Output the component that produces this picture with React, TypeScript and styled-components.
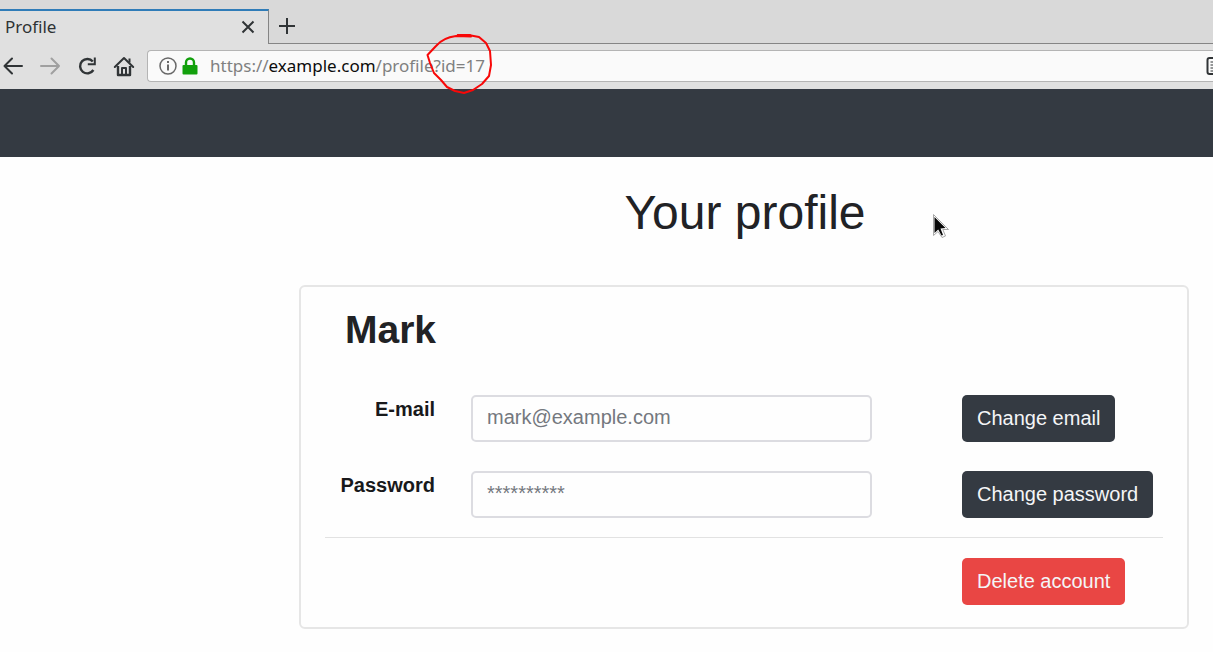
import React from "react";
import styled, { createGlobalStyle } from "styled-components";

const GlobalStyle = createGlobalStyle`
  *, *::before, *::after { box-sizing: border-box; }
  body {
    margin: 0;
    background: #fefefe;
    color: #212225;
    font-family: "Liberation Sans", Arial, sans-serif;
    font-size: 20px;
    line-height: 28px;
  }
`;

const Window = styled.div`
  position: relative;
  overflow: hidden;
`;

const Chrome = styled.header`
  background: #e0e0e0;
  font-family: "Noto Sans", sans-serif;
`;

const TabStrip = styled.div`
  display: flex;
  align-items: stretch;
  height: 44px;
  padding-top: 9px;
  background: #d9d9d9;
`;

const Tab = styled.div`
  display: flex;
  align-items: center;
  justify-content: space-between;
  width: 269px;
  padding: 0 12px 2px 5px;
  background: #e0e0e0;
  border-top: 2px solid #2f7cb8;
  border-right: 1px solid #858585;
  font-size: 17px;
  color: #2e3234;
`;

const StripRest = styled.div`
  flex: 1;
  display: flex;
  align-items: center;
  padding-left: 9px;
  border-bottom: 1px solid #858585;
`;

const IconButton = styled.button`
  display: flex;
  flex: none;
  padding: 0;
  border: 0;
  background: none;
  color: #303436;

  &:disabled { color: #a0a0a0; }
`;

const Toolbar = styled.div`
  display: flex;
  align-items: center;
  height: 45px;
  padding: 0 0 1px 2px;
`;

const NavButtons = styled.nav`
  display: flex;
  flex: none;
  align-items: center;
  gap: 15px;
  width: 145px;
`;

const AddressBar = styled.div`
  flex: 1;
  display: flex;
  align-items: center;
  height: 32px;
  padding-left: 10px;
  background: #fafafa;
  border: 1px solid #b4b4b4;
  border-right: 0;
  border-radius: 4px 0 0 4px;
`;

const LockButton = styled(IconButton)`
  margin-left: 2px;
`;

const Address = styled.div`
  flex: 1;
  margin-left: 10px;
  font-size: 17px;
  color: #808080;
  white-space: nowrap;
`;

const Host = styled.span`
  color: #0c0c0c;
`;

const ReaderButton = styled(IconButton)`
  margin-right: -9px;
`;

const SiteBar = styled.div`
  height: 68px;
  background: #343a42;
`;

const Page = styled.main`
  padding: 26px 24px 22px 299px;
`;

const Title = styled.h1`
  margin: 0 0 42px;
  padding-left: 2px;
  font-size: 48px;
  line-height: 60px;
  font-weight: 400;
  text-align: center;
`;

const Card = styled.section`
  padding: 19px 24px 22px;
  border: 2px solid #e6e6e6;
  border-radius: 6px;
`;

const Name = styled.h2`
  margin: 0 0 41px;
  padding-left: 20px;
  font-size: 39px;
  line-height: 48px;
`;

const Row = styled.div`
  display: grid;
  grid-template-columns: 110px minmax(0, 1fr) 201px;
  margin-bottom: 29px;
`;

const Label = styled.label`
  font-weight: 700;
  text-align: right;
  color: #18191b;
`;

const Field = styled.input`
  height: 47px;
  margin: 0 90px 0 36px;
  min-width: 0;
  padding: 0 14px 2px;
  border: 2px solid #dcdce1;
  border-radius: 5px;
  background: #fefefe;
  font: inherit;

  &::placeholder { color: #74787e; opacity: 1; }
`;

const Button = styled.button<{ $danger?: boolean }>`
  justify-self: start;
  height: 47px;
  padding: 0 15px 2px;
  border: 0;
  border-radius: 5px;
  background: ${(p) => (p.$danger ? "#e94644" : "#343a42")};
  color: #f4f5f7;
  font: inherit;
  white-space: nowrap;
`;

const Divider = styled.hr`
  margin: -10px 0 20px;
  border: 0;
  border-top: 1px solid #e2e2e2;
`;

const Actions = styled.div`
  display: grid;
  grid-template-columns: 201px;
  justify-content: end;
`;

const Marker = styled.svg`
  position: absolute;
  left: 424px;
  top: 30px;
  pointer-events: none;
`;

const Pointer = styled.svg`
  position: absolute;
  left: 931px;
  top: 212px;
  pointer-events: none;
`;

const stroke = { fill: "none", stroke: "currentColor", strokeWidth: 2 };

export default function App() {
  return (
    <Window>
      <GlobalStyle />
      <Chrome>
        <TabStrip>
          <Tab>
            Profile
            <IconButton aria-label="Close tab">
              <svg width="16" height="16" {...stroke}>
                <path d="M2.500 2.500l11 11M13.500 2.500l-11 11" />
              </svg>
            </IconButton>
          </Tab>
          <StripRest>
            <IconButton aria-label="New tab">
              <svg width="18" height="18" {...stroke}>
                <path d="M9 1v16M1 9h16" />
              </svg>
            </IconButton>
          </StripRest>
        </TabStrip>
        <Toolbar>
          <NavButtons aria-label="Browser">
            <IconButton aria-label="Back">
              <svg width="22" height="22" {...stroke} strokeLinecap="round" strokeLinejoin="round">
                <path d="M20 11H2.500M10 3.500L2.500 11l7.500 7.500" />
              </svg>
            </IconButton>
            <IconButton aria-label="Forward" disabled>
              <svg width="22" height="22" {...stroke} strokeLinecap="round" strokeLinejoin="round">
                <path d="M2 11h18M12.500 3.500L20 11l-7.500 7.500" />
              </svg>
            </IconButton>
            <IconButton aria-label="Reload">
              <svg width="22" height="22" fill="none" stroke="currentColor" strokeWidth="2.400">
                <path d="M17.400 15A7.200 7.200 0 1 1 16.800 6.500" />
                <path d="M18.800 2.500v6.800h-7" strokeWidth="2" />
              </svg>
            </IconButton>
            <IconButton aria-label="Home">
              <svg width="22" height="22" {...stroke} strokeLinejoin="round">
                <path d="M1.800 12L11 3l9.200 9" strokeLinecap="round" />
                <path d="M5 11v9h12v-9" strokeWidth="2.400" />
                <path d="M9 20v-7h4v7" />
                <path d="M16.500 3.500v4" />
              </svg>
            </IconButton>
          </NavButtons>
          <AddressBar>
            <IconButton aria-label="Site information">
              <svg width="20" height="20" fill="none" stroke="#686868" strokeWidth="1.500">
                <circle cx="10" cy="10" r="8" />
                <path d="M10 8.500v6M10 5v2" strokeWidth="2" />
              </svg>
            </IconButton>
            <LockButton aria-label="Secure connection">
              <svg width="20" height="20">
                <path d="M6 10V6.500a4 4 0 0 1 8 0V10" fill="none" stroke="#12a00c" strokeWidth="2.400" />
                <rect x="2.500" y="9" width="15" height="9.500" rx="1" fill="#12a00c" />
              </svg>
            </LockButton>
            <Address role="textbox" aria-label="Address" tabIndex={0}>
              https://<Host>example.com</Host>/profile?id=17
            </Address>
            <ReaderButton aria-label="Reader view">
              <svg width="16" height="20" {...stroke}>
                <rect x="1.500" y="2" width="13" height="16" rx="2" />
                <path d="M4.500 6h7M4.500 9h7M4.500 12h7M4.500 15h4" strokeWidth="1.200" />
              </svg>
            </ReaderButton>
          </AddressBar>
        </Toolbar>
      </Chrome>
      <SiteBar />
      <Page>
        <Title>Your profile</Title>
        <Card>
          <Name>Mark</Name>
          <Row>
            <Label htmlFor="email">E-mail</Label>
            <Field id="email" type="email" placeholder="mark@example.com" />
            <Button type="button">Change email</Button>
          </Row>
          <Row>
            <Label htmlFor="password">Password</Label>
            <Field id="password" type="password" placeholder="**********" />
            <Button type="button">Change password</Button>
          </Row>
          <Divider />
          <Actions>
            <Button type="button" $danger>Delete account</Button>
          </Actions>
        </Card>
      </Page>
      <Marker width="72" height="66" fill="none" stroke="#f80808" strokeWidth="2" strokeLinecap="round" strokeLinejoin="round">
        <path d="M47 6.500L32 6C24 7 17 10 12 16L3.500 25L6 33L10 43L17 50L23 57L31 61L40 63L49 60L58 54L65 46L67 35L66 21L62 13L55 7L47 5.500L34 5" />
        <path d="M34 5.500h12" strokeWidth="3" />
      </Marker>
      <Pointer width="20" height="28">
        <path d="M2.500 2.500V23.500L7 19.500L11 25.500L14.500 24L11.800 17.500H17.500z" fill="#fefefe" stroke="#a8a8a8" strokeWidth="1" />
        <path d="M3.500 5V21L7.200 17.500L10.500 23.500L12 23L9.500 16.500L14.500 16z" fill="#080808" />
      </Pointer>
    </Window>
  );
}
